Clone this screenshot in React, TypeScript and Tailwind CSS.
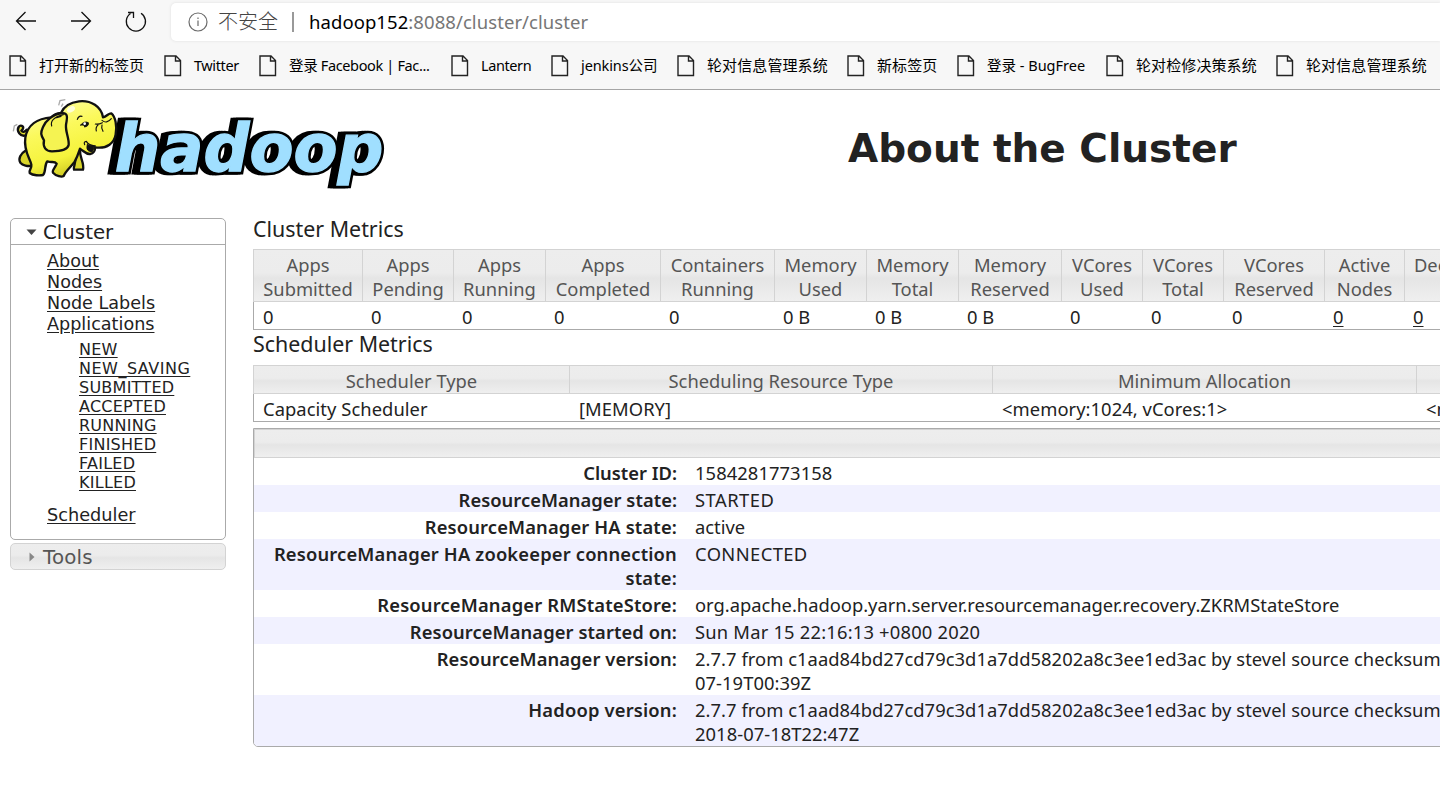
import React from "react";

const bookmarks: [string, string, string][] = [
  ["打开新的标签页", "w-[155px]", "text-[15px]"],
  ["Twitter", "w-[95px]", "text-[14.5px] tracking-[-0.4px]"],
  ["登录 Facebook | Fac...", "w-[192px]", "text-[14.5px] tracking-[-0.35px]"],
  ["Lantern", "w-[100px]", "text-[14.5px] tracking-[-0.4px]"],
  ["jenkins公司", "w-[126px]", "text-[14.5px] tracking-[-0.1px]"],
  ["轮对信息管理系统", "w-[170px]", "text-[15px] tracking-[0.1px]"],
  ["新标签页", "w-[110px]", "text-[15px] tracking-[0.1px]"],
  ["登录 - BugFree", "w-[149px]", "text-[14.5px]"],
  ["轮对检修决策系统", "w-[170px]", "text-[15px] tracking-[0.1px]"],
  ["轮对信息管理系统", "w-[170px]", "text-[15px] tracking-[0.1px]"],
];

type Metric = { top: string; bottom: string; value: string; width: string; link?: boolean };

const metrics: Metric[] = [
  { top: "Apps", bottom: "Submitted", value: "0", width: "w-[109px]" },
  { top: "Apps", bottom: "Pending", value: "0", width: "w-[91px]" },
  { top: "Apps", bottom: "Running", value: "0", width: "w-[92px]" },
  { top: "Apps", bottom: "Completed", value: "0", width: "w-[115px]" },
  { top: "Containers", bottom: "Running", value: "0", width: "w-[114px]" },
  { top: "Memory", bottom: "Used", value: "0 B", width: "w-[92px]" },
  { top: "Memory", bottom: "Total", value: "0 B", width: "w-[92px]" },
  { top: "Memory", bottom: "Reserved", value: "0 B", width: "w-[103px]" },
  { top: "VCores", bottom: "Used", value: "0", width: "w-[81px]" },
  { top: "VCores", bottom: "Total", value: "0", width: "w-[81px]" },
  { top: "VCores", bottom: "Reserved", value: "0", width: "w-[101px]" },
  { top: "Active", bottom: "Nodes", value: "0", width: "w-[80px]", link: true },
  { top: "Decommissioned", bottom: "Nodes", value: "0", width: "w-[168px]", link: true },
];

const scheduler: [string, string, string][] = [
  ["Scheduler Type", "Capacity Scheduler", "w-[316px]"],
  ["Scheduling Resource Type", "[MEMORY]", "w-[423px]"],
  ["Minimum Allocation", "<memory:1024, vCores:1>", "w-[424px]"],
  ["Maximum Allocation", "<memory:8192, vCores:8>", "w-[424px]"],
];

const version = "2.7.7 from c1aad84bd27cd79c3d1a7dd58202a8c3ee1ed3ac by stevel source checksum";

const info: { label: string[]; value: string[]; tracking: string; labelTracking: string }[] = [
  { label: ["Cluster ID:"], value: ["1584281773158"], tracking: "tracking-[0.07px]", labelTracking: "" },
  { label: ["ResourceManager state:"], value: ["STARTED"], tracking: "tracking-[0.5px]", labelTracking: "tracking-[0.03px]" },
  { label: ["ResourceManager HA state:"], value: ["active"], tracking: "", labelTracking: "tracking-[0.14px]" },
  { label: ["ResourceManager HA zookeeper connection", "state:"], value: ["CONNECTED"], tracking: "tracking-[0.4px]", labelTracking: "tracking-[0.17px]" },
  { label: ["ResourceManager RMStateStore:"], value: ["org.apache.hadoop.yarn.server.resourcemanager.recovery.ZKRMStateStore"], tracking: "tracking-[-0.01px]", labelTracking: "tracking-[0.17px]" },
  { label: ["ResourceManager started on:"], value: ["Sun Mar 15 22:16:13 +0800 2020"], tracking: "tracking-[0.2px]", labelTracking: "tracking-[0.08px]" },
  { label: ["ResourceManager version:"], value: [version, "07-19T00:39Z"], tracking: "tracking-[0.05px]", labelTracking: "tracking-[0.08px]" },
  { label: ["Hadoop version:"], value: [version, "2018-07-18T22:47Z"], tracking: "tracking-[0.05px]", labelTracking: "tracking-[0.18px]" },
];

const states = ["NEW", "NEW_SAVING", "SUBMITTED", "ACCEPTED", "RUNNING", "FINISHED", "FAILED", "KILLED"];

const headFill = "bg-[linear-gradient(#ededed_0%,#ececec_45%,#e5e5e5_55%,#efefef_100%)]";

function BrowserBar() {
  return (
    <header className="flex h-[90px] shrink-0 flex-col border-b border-[#a5a5a5] bg-[#f7f7f7]">
      <div className="flex h-[44px]">
        <svg className="h-[44px] w-[171px] shrink-0" fill="none" stroke="#111" strokeWidth="1.3">
          <path d="M36 21H17M25.5 12L16.5 21L25.5 30M71 21H90M81.5 12L90.5 21L81.5 30" />
          <path d="M130.5 13.5A9.6 9.6 0 1 0 141 13.3M128 12.5H133.5V18" />
        </svg>
        <div className="mt-[3px] flex h-[38px] flex-1 items-center rounded-l-[5px] bg-white shadow-[0_0_3px_#ddd]">
          <svg className="ml-[17px] h-[20px] w-[20px] shrink-0" fill="none" stroke="#6b6b6b" strokeWidth="1.2">
            <circle cx="10" cy="10" r="9" />
            <path d="M10 8.5V14M10 5.5V7" />
          </svg>
          <span className="ml-[10px] w-[74px] text-[20px] font-light text-[#444]">不安全</span>
          <span className="mr-[15px] h-[20px] w-[2px] bg-[#999]" />
          <span className="text-[18.5px] tracking-[0.07px] text-[#767676]">
            <span className="text-black">hadoop152</span>:8088/cluster/cluster
          </span>
        </div>
      </div>
      <nav className="flex h-[43px] items-center pl-[9px] text-black">
        {bookmarks.map(([label, width, type], i) => (
          <div key={i} className={`flex h-[22px] shrink-0 items-center whitespace-nowrap ${width}`}>
            <svg className="mr-[12px] h-[22px] w-[18px] shrink-0" fill="none" stroke="#222" strokeWidth="1.4">
              <path d="M1 1H12L16.5 5.5V20.5H1ZM11.5 1V6H16.5" />
            </svg>
            <span className={type}>{label}</span>
          </div>
        ))}
      </nav>
    </header>
  );
}

function Logo() {
  return (
    <svg className="h-[110px] w-[400px] shrink-0" viewBox="0 0 1200 330">
      <defs>
        <linearGradient id="skin" x1="0.1" y1="0" x2="0.5" y2="1">
          <stop offset="0" stopColor="#ffffa8" />
          <stop offset="0.4" stopColor="#fbf95c" />
          <stop offset="0.75" stopColor="#f5f33c" />
          <stop offset="1" stopColor="#c9c420" />
        </linearGradient>
      </defs>
      <g fill="none" stroke="#aaa" strokeWidth="4">
        <path d="M176 46L180 32L196 29M184 50L189 41M40 124L43 108L52 103" />
      </g>
      <g fill="#000" stroke="#000" strokeWidth="20" strokeLinejoin="miter">
        <text id="word" x="344" y="242" textLength="806" lengthAdjust="spacingAndGlyphs" className="font-['DejaVu_Sans'] text-[198px] font-bold italic">hadoop</text>
        <use href="#word" x="-8" />
        <use href="#word" x="-16" />
      </g>
      <use href="#word" fill="#a0dfff" stroke="#a0dfff" strokeWidth="4" />
      <g stroke="#111" strokeWidth="7" strokeLinejoin="round" strokeLinecap="round">
        <path fill="#e2df30" d="M78 136C60 142 49 122 56 111C61 103 72 108 69 116L64 122C69 129 76 124 80 119" />
        <path fill="#d9d52b" d="M76 182C62 190 54 207 61 218C68 226 84 230 94 227M222 196C234 208 218 230 222 239H249C254 218 238 204 240 178" />
        <path fill="url(#skin)" d="M154 82C112 85 82 105 76 143C70 184 91 207 94 224C96 236 86 239 89 249C99 257 120 257 129 255C139 245 132 226 142 214C155 219 163 212 170 221C166 234 155 240 159 248C169 259 185 262 191 258C198 241 214 230 224 215C232 201 236 188 240 176C253 184 257 193 270 192C281 190 286 181 285 172C322 178 343 158 347 133C352 108 346 80 334 70C326 69 320 80 309 82C304 50 273 30 237 34C211 37 191 50 183 69C171 70 160 75 154 82Z" />
        <path fill="#f5f352" d="M184 70C157 73 136 94 129 111C121 129 122 135 132 151C128 171 137 184 156 184C184 184 203 177 206 165C208 145 196 126 198 105C200 89 205 77 197 72C193 69 188 69 184 70Z" />
        <path fill="none" strokeWidth="3.5" d="M155 108C151 94 161 81 190 74M170 83L183 79M232 88Q236 76 246 79M306 91Q320 103 334 86M286 102Q296 104 307 98M289 123Q286 112 294 105M309 124Q303 113 306 105M254 164Q250 155 259 154Q266 166 286 168" />
        <path fill="#111" strokeWidth="3" d="M262 164C258 179 264 185 277 185C283 178 279 169 286 168C276 169 268 165 262 164M242 105Q253 92 265 98Q267 109 253 111Q259 104 242 105" />
      </g>
      <circle cx="254" cy="101" r="4" fill="#fff" />
      <ellipse cx="213" cy="58" rx="13" ry="8" fill="#fff" opacity=".7" transform="rotate(-30 213 58)" />
    </svg>
  );
}

function Sidebar() {
  return (
    <aside className="flex w-[216px] shrink-0 flex-col gap-[3px] font-['DejaVu_Sans',sans-serif]">
      <section className="flex h-[322px] flex-col rounded-[5px] border border-[#aaa]">
        <h3 className="flex h-[26px] shrink-0 items-center border-b border-[#aaa] pl-[15px] text-[19.8px] leading-[24px]">
          <svg className="mr-[6px] h-[6px] w-[11px]"><path d="M0.5 0.5H10.5L5.5 6Z" fill="#444" /></svg>
          <span className="pt-[2px]">Cluster</span>
        </h3>
        <ul className="pl-[36px] pt-[6px] text-[17.6px] leading-[21px] underline underline-offset-2">
          <li>About</li>
          <li>Nodes</li>
          <li>Node Labels</li>
          <li>Applications</li>
        </ul>
        <ul className="pl-[68px] pt-[5px] text-[16px] leading-[19px] tracking-[0.25px] underline underline-offset-2">
          {states.map((s) => <li key={s} className={s === "NEW_SAVING" ? "tracking-[0.5px]" : ""}>{s}</li>)}
        </ul>
        <div className="pl-[36px] pt-[13px] text-[17.7px] leading-[21px] underline underline-offset-2">Scheduler</div>
      </section>
      <section className={`flex h-[27px] items-center rounded-[5px] border border-[#d3d3d3] pl-[18px] text-[19.8px] text-[#555] ${headFill}`}>
        <svg className="mr-[8px] h-[10px] w-[6px]"><path d="M0.5 0.5V9.5L5.5 5Z" fill="#888" /></svg>
        <span className="pt-[2px] tracking-[0.2px]">Tools</span>
      </section>
    </aside>
  );
}

function Content() {
  return (
    <main className="w-[1500px] shrink-0 whitespace-nowrap text-[18.35px] leading-[24px]">
      <h2 className="-mt-[4px] h-[35px] text-[21.4px] leading-[30px]">Cluster Metrics</h2>
      <div className="flex h-[81px] border-b border-l border-[#aaa]">
        {metrics.map((m, i) => (
          <div key={i} className={`shrink-0 ${m.width} ${i === 0 ? "-ml-px" : ""}`}>
            <div className={`h-[53px] border-y border-l border-[#d3d3d3] pt-[3px] text-center text-[#555] ${headFill}`}>
              <div>{m.top}</div>
              <div>{m.bottom}</div>
            </div>
            <div className={`pt-[3px] ${i === 0 ? "pl-[10px]" : "pl-[9px]"}`}>
              <span className={m.link ? "underline underline-offset-2" : ""}>{m.value}</span>
            </div>
          </div>
        ))}
      </div>
      <h2 className="-mt-px h-[36px] text-[21.4px] leading-[30px]">Scheduler Metrics</h2>
      <div className="flex h-[57px] border-b border-l border-[#aaa]">
        {scheduler.map(([title, value, width], i) => (
          <div key={title} className={`shrink-0 ${width} ${i === 0 ? "-ml-px" : ""}`}>
            <div className={`h-[29px] border-y border-l border-[#d3d3d3] pt-[3px] text-center text-[#555] ${headFill}`}>{title}</div>
            <div className="pl-[10px] pt-[3px] tracking-[0.06px]">{value}</div>
          </div>
        ))}
      </div>
      <div className="mt-[6px] h-[319px] overflow-hidden rounded-bl-[5px] border border-[#aaa]">
        <div className={`h-[29px] border border-[#d3d3d3] ${headFill}`} />
        {info.map((row, i) => (
          <div key={i} className={`flex pt-[3px] ${i % 2 ? "bg-[#f1f1ff]" : "bg-white"}`}>
            <div className={`w-[423px] shrink-0 text-right font-semibold ${row.labelTracking}`}>
              {row.label.map((l) => <div key={l}>{l}</div>)}
            </div>
            <div className="pl-[18px]">
              {row.value.map((v) => <div key={v} className={row.tracking}>{v}</div>)}
            </div>
          </div>
        ))}
      </div>
    </main>
  );
}

export default function App() {
  return (
    <div className="flex h-[792px] w-[1440px] flex-col overflow-hidden bg-white font-['Noto_Sans','Noto_Sans_CJK_SC',sans-serif] text-[#222]">
      <BrowserBar />
      <div className="flex h-[128px] shrink-0">
        <Logo />
        <h1 className="ml-[448px] mt-[36px] whitespace-nowrap font-['DejaVu_Sans',sans-serif] text-[39px] font-bold leading-[46px]">About the Cluster</h1>
      </div>
      <div className="flex gap-[27px] pl-[10px]">
        <Sidebar />
        <Content />
      </div>
    </div>
  );
}
